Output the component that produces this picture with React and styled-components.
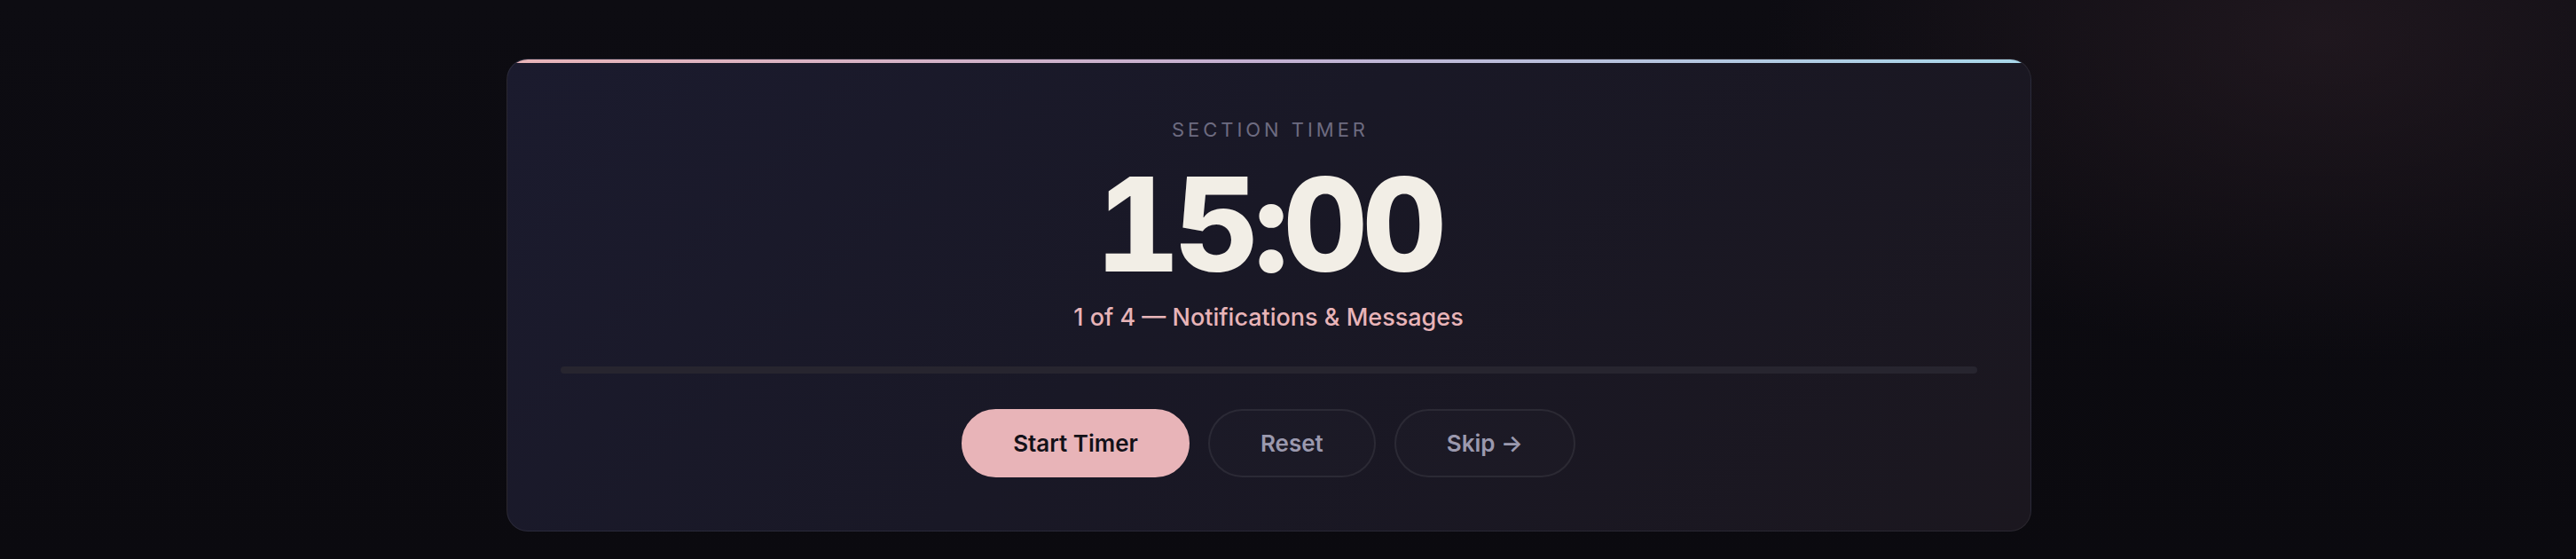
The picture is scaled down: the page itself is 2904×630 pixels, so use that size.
import React from 'react';
import styled, {createGlobalStyle} from 'styled-components';

const GlobalStyle = createGlobalStyle`
  html, body {
    margin: 0;
    padding: 0;
    background: #0c0b11;
  }
  body {
    font-family: Inter, "Noto Sans", sans-serif;
    -webkit-font-smoothing: antialiased;
  }
`;

const Page = styled('div')`
  min-height: 630px;
  box-sizing: border-box;
  padding: 66px 44px 0 0;
  display: flex;
  justify-content: center;
  align-items: flex-start;
  background:
    radial-gradient(ellipse 900px 520px at 2620px 40px, rgba(46, 32, 40, 0.55), transparent 70%),
    linear-gradient(180deg, #0d0c12 0%, #0b0a0f 100%);
`;

const Card = styled('section')`
  position: relative;
  width: 1719px;
  box-sizing: border-box;
  padding: 67px 60px 60px;
  border: 1px solid rgba(255, 255, 255, 0.07);
  border-radius: 24px;
  overflow: hidden;
  background: linear-gradient(135deg, #1b1b2e 0%, #191826 45%, #1b171f 100%);
  display: flex;
  flex-direction: column;
  align-items: center;
`;

const AccentBar = styled('div')`
  position: absolute;
  top: 0;
  left: 0;
  right: 0;
  height: 4px;
  background: linear-gradient(90deg, #e8b4b8 0%, #c3b0d2 50%, #a8d8ea 100%);
`;

const Label = styled('div')`
  font-size: 22px;
  line-height: 1;
  letter-spacing: 0.18em;
  margin-right: -0.18em;
  margin-top: 1px;
  text-transform: uppercase;
  color: #6d6b80;
  font-weight: 400;
`;

const Clock = styled('div')`
  margin-top: 22px;
  font-size: 147px;
  line-height: 1;
  font-weight: 800;
  letter-spacing: -0.04em;
  color: #f2eee6;
  font-variant-numeric: tabular-nums;
`;

const Section = styled('div')`
  margin-top: 18px;
  font-size: 27px;
  line-height: 1;
  font-weight: 500;
  color: #e8b4b8;
`;

const Track = styled('div')`
  margin-top: 42px;
  width: 100%;
  height: 8px;
  border-radius: 4px;
  background: #27252f;
  overflow: hidden;
`;

const Fill = styled('div')`
  height: 100%;
  background: linear-gradient(90deg, #e8b4b8, #a8d8ea);
`;

const Controls = styled('div')`
  margin-top: 40px;
  display: flex;
  gap: 21px;
`;

const Button = styled('button')`
  height: 77px;
  padding: 0 ${p => (p.$primary ? 56 : 57)}px;
  border-radius: 999px;
  font-family: Inter, "Noto Sans", sans-serif;
  font-size: 26px;
  font-weight: 600;
  cursor: pointer;
  border: 2px solid ${p => (p.$primary ? '#e8b4b8' : 'rgba(255, 255, 255, 0.07)')};
  background: ${p => (p.$primary ? '#e8b4b8' : 'rgba(255, 255, 255, 0.01)')};
  color: ${p => (p.$primary ? '#131118' : '#9b99ae')};
`;

export default function App() {
  const progress = 0;
  return (
    <>
      <GlobalStyle/>
      <Page>
        <Card>
          <AccentBar/>
          <Label>Section Timer</Label>
          <Clock>15:00</Clock>
          <Section>1 of 4 — Notifications &amp; Messages</Section>
          <Track>
            <Fill style={{width: `${progress}%`}}/>
          </Track>
          <Controls>
            <Button $primary>Start Timer</Button>
            <Button>Reset</Button>
            <Button>Skip →</Button>
          </Controls>
        </Card>
      </Page>
    </>
  );
}
